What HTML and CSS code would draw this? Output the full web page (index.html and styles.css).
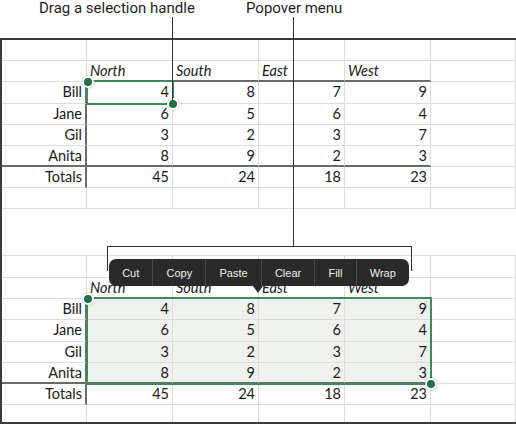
FILE: index.html
```html
<!DOCTYPE html>
<html>
<head>
<meta charset="utf-8">
<link rel="stylesheet" href="styles.css">
</head>
<body>
<div class="page">
  <div class="cap cap-drag">Drag a selection handle</div>
  <div class="cap cap-pop">Popover menu</div>
  <div class="frame">
    <div class="sheet sheet-top">
      <div class="grid grid-top">
        <div class="c"></div><div class="c"></div><div class="c"></div><div class="c"></div><div class="c"></div><div class="c"></div>
        <div class="c"></div><div class="c hd dk-b">North</div><div class="c hd dk-b">South</div><div class="c hd dk-b">East</div><div class="c hd dk-b">West</div><div class="c"></div>
        <div class="c rh dk-r">Bill</div><div class="c num">4</div><div class="c num">8</div><div class="c num">7</div><div class="c num">9</div><div class="c"></div>
        <div class="c rh dk-r">Jane</div><div class="c num">6</div><div class="c num">5</div><div class="c num">6</div><div class="c num">4</div><div class="c"></div>
        <div class="c rh dk-r">Gil</div><div class="c num">3</div><div class="c num">2</div><div class="c num">3</div><div class="c num">7</div><div class="c"></div>
        <div class="c rh dk-r dk-b">Anita</div><div class="c num dk-b">8</div><div class="c num dk-b">9</div><div class="c num dk-b">2</div><div class="c num dk-b">3</div><div class="c"></div>
        <div class="c rh dk-r">Totals</div><div class="c num">45</div><div class="c num">24</div><div class="c num">18</div><div class="c num">23</div><div class="c"></div>
        <div class="c"></div><div class="c"></div><div class="c"></div><div class="c"></div><div class="c"></div><div class="c"></div>
      </div>
      <div class="selection sel-top"><span class="handle h-tl"></span><span class="handle h-br"></span></div>
    </div>
    <div class="sheet sheet-bottom">
      <div class="grid grid-bottom">
        <div class="c"></div><div class="c"></div><div class="c"></div><div class="c"></div><div class="c"></div><div class="c"></div>
        <div class="c"></div><div class="c hd dk-b">North</div><div class="c hd dk-b">South</div><div class="c hd dk-b">East</div><div class="c hd dk-b">West</div><div class="c"></div>
        <div class="c rh dk-r">Bill</div><div class="c num sel">4</div><div class="c num sel">8</div><div class="c num sel">7</div><div class="c num sel">9</div><div class="c"></div>
        <div class="c rh dk-r">Jane</div><div class="c num sel">6</div><div class="c num sel">5</div><div class="c num sel">6</div><div class="c num sel">4</div><div class="c"></div>
        <div class="c rh dk-r">Gil</div><div class="c num sel">3</div><div class="c num sel">2</div><div class="c num sel">3</div><div class="c num sel">7</div><div class="c"></div>
        <div class="c rh dk-r dk-b">Anita</div><div class="c num sel dk-b">8</div><div class="c num sel dk-b">9</div><div class="c num sel dk-b">2</div><div class="c num sel dk-b">3</div><div class="c"></div>
        <div class="c rh dk-r">Totals</div><div class="c num">45</div><div class="c num">24</div><div class="c num">18</div><div class="c num">23</div><div class="c"></div>
        <div class="c"></div><div class="c"></div><div class="c"></div><div class="c"></div><div class="c"></div><div class="c"></div>
      </div>
      <div class="selection sel-bottom"><span class="handle h-tl"></span><span class="handle h-br"></span></div>
    </div>
  </div>
  <div class="callout call-drag"></div>
  <div class="callout call-pop"></div>
  <div class="bracket"></div>
  <div class="popover">
    <span class="item">Cut</span><span class="item">Copy</span><span class="item">Paste</span><span class="item">Clear</span><span class="item">Fill</span><span class="item">Wrap</span>
  </div>
</div>
</body>
</html>
```
FILE: styles.css
```css
html, body {
  margin: 0;
  padding: 0;
  background: #ffffff;
}

.page {
  position: relative;
  width: 516px;
  height: 425px;
  padding-top: 38px;
  box-sizing: border-box;
  overflow: hidden;
  font-family: Lato, "Open Sans", sans-serif;
  color: #1a1a1a;
}

.cap {
  position: absolute;
  top: 0;
  font-family: Roboto, "Liberation Sans", sans-serif;
  font-size: 15px;
  line-height: 16px;
  color: #1e1e1e;
  white-space: nowrap;
}

.cap-drag { left: 39px; }
.cap-pop { left: 246px; }

.frame {
  height: 386px;
  box-sizing: border-box;
  border: 2px solid #3a3a3a;
  border-right: 0;
  display: flex;
  flex-direction: column;
}

.sheet {
  position: relative;
}

.sheet-bottom {
  margin-top: 46px;
  flex: 1;
  display: flex;
  flex-direction: column;
}

.grid {
  display: grid;
  grid-template-columns: 85px 86px 86px 86px 86px 1fr;
}

.grid-top {
  grid-template-rows: 21px 21px 22px 21px 21px 21px 21px 21px;
}

.grid-bottom {
  flex: 1;
  border-top: 1px solid #dcdcdc;
  grid-template-rows: 22px 21px 21px 22px 21px 21px 21px 1fr;
}

.c {
  box-sizing: border-box;
  border-right: 1px solid #dcdcdc;
  border-bottom: 1px solid #dcdcdc;
  font-size: 14.5px;
  line-height: 20px;
  white-space: nowrap;
  overflow: hidden;
}

.grid-bottom .c:nth-last-child(-n+6) {
  border-bottom: 0;
}

.hd {
  font-style: italic;
  padding-left: 3px;
}

.rh {
  text-align: right;
  padding-right: 3px;
}

.num {
  text-align: right;
  padding-right: 3px;
}

.dk-b {
  border-bottom: 2px solid #6a6a6a;
}

.dk-r {
  border-right: 2px solid #6a6a6a;
}

.sel {
  background: #eff1ec;
}

.selection {
  position: absolute;
  box-sizing: border-box;
  border: 2px solid #3f8a5c;
}

.sel-top {
  left: 84px;
  top: 40px;
  width: 88px;
  height: 25px;
}

.sel-bottom {
  left: 84px;
  top: 42px;
  width: 346px;
  height: 88px;
}

.handle {
  position: absolute;
  width: 8px;
  height: 8px;
  border-radius: 50%;
  background: #1e7146;
  border: 2px solid #ffffff;
  box-shadow: 0 0 2px rgba(0, 0, 0, 0.35);
}

.h-tl { left: -6px; top: -6px; }
.h-br { right: -7px; bottom: -7px; }

.callout {
  position: absolute;
  width: 1px;
  background: #2e2e2e;
}

.call-drag {
  left: 172px;
  top: 17px;
  height: 84px;
}

.call-pop {
  left: 293px;
  top: 17px;
  height: 230px;
}

.bracket {
  position: absolute;
  left: 107px;
  top: 246px;
  width: 303px;
  height: 24px;
  border: 1px solid #2e2e2e;
  border-bottom: 0;
}

.popover {
  position: absolute;
  left: 109px;
  top: 259px;
  width: 300px;
  height: 27px;
  display: flex;
  background: #2a2a2a;
  border-radius: 7px;
  font-family: "Liberation Sans", Arial, sans-serif;
  font-size: 11px;
  color: #eeeeee;
}

.popover::after {
  content: "";
  position: absolute;
  left: 144px;
  top: 27px;
  border-left: 5px solid transparent;
  border-right: 5px solid transparent;
  border-top: 7px solid #2a2a2a;
}

.item {
  flex: 1 1 auto;
  display: flex;
  align-items: center;
  justify-content: center;
  padding: 0 12px;
}

.item + .item {
  border-left: 1px solid #4a4a4a;
}
```
